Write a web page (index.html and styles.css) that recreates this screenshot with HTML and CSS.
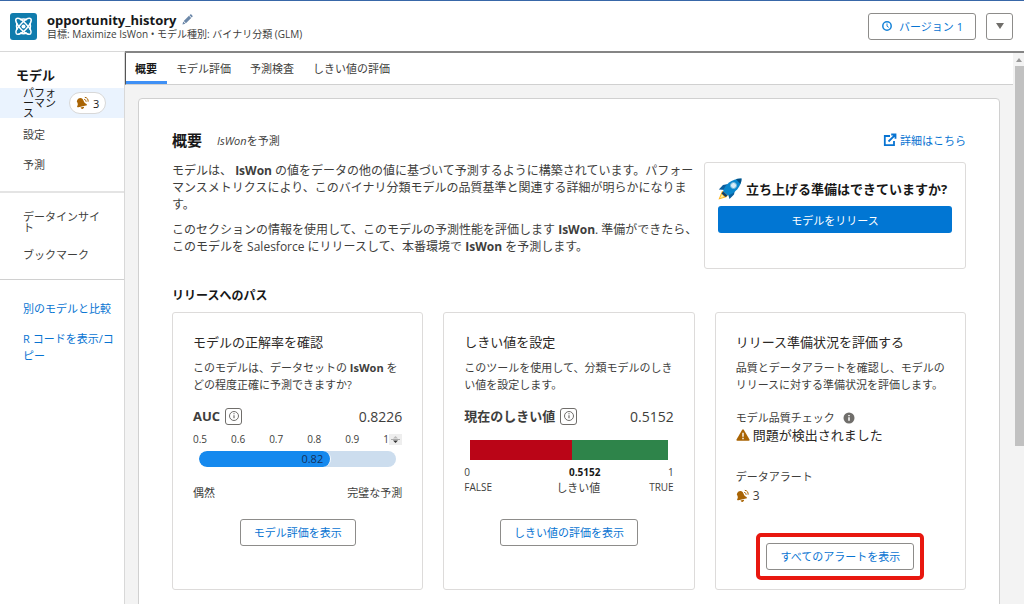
FILE: index.html
```html
<!DOCTYPE html>
<html lang="ja">
<head>
<meta charset="utf-8">
<meta name="viewport" content="width=device-width, initial-scale=1">
<title>opportunity_history</title>
<link rel="stylesheet" href="styles.css">
</head>
<body>
<svg class="defs" aria-hidden="true">
  <symbol id="bell" viewBox="0 0 14 14">
    <path d="M.8 5.400C1.400 2.400 4.600 1.200 6.600 2.900c1 .9 1 3.200 2.600 4.300l1.300.7c.7.6.4 1.500-.5 1.600l-7.600 1.800c-.9.2-1.700-.6-1.100-1.400.9-1.300.6-2.700-.5-4.500z" fill="#a96404"/>
    <path d="M4.500 11.600l3.600-.8c0 2.400-2.900 2.900-3.600.8z" fill="#a96404"/>
    <path d="M8.200 3.400c1.300.2 2 1.100 1.900 2.400M8.800 1.300c2.300.2 3.600 2 3.300 4.400" fill="none" stroke="#a96404" stroke-width="1"/>
  </symbol>
  <symbol id="info" viewBox="0 0 12 12">
    <circle cx="6" cy="6" r="4.500" fill="none" stroke="#706e6b"/>
    <path d="M6 5.300v3M6 3.300v1" stroke="#706e6b" stroke-width="1.200"/>
  </symbol>
</svg>
<div class="app">
  <header class="header">
    <svg class="logo" viewBox="0 0 27 27" aria-hidden="true">
      <rect width="27" height="27" rx="3" fill="#107cad"/>
      <g fill="none" stroke="#fff" stroke-width="1.500">
        <path d="M6.200 5.800c1.800-1.600 6 1.200 9.400 4.700s6.600 8.300 5 10.300c-1.600 1.700-6.200-1-9.600-4.600S4.600 7.600 6.200 5.800z"/>
        <path d="M20.800 5.800c-1.800-1.600-6 1.200-9.400 4.700s-6.600 8.300-5 10.300c1.600 1.700 6.200-1 9.600-4.600s6.400-8.600 4.800-10.400z"/>
        <path d="M10 6.700c2.400-.9 4.600-.9 7 0M10 20c2.400.9 4.600.9 7 0M7 10c-.8 2.500-.8 4.500 0 7M20 10c.8 2.500.8 4.500 0 7"/>
      </g>
      <circle cx="13.500" cy="13.400" r="2" fill="#fff"/>
    </svg>
    <div class="heading">
      <div class="title-row">
        <h1>opportunity_history</h1>
        <svg class="pencil" viewBox="0 0 12 12" aria-hidden="true"><path d="M.5 11.500l.8-3.200 2.400 2.400zM1.900 7.700l5.700-5.700 2.400 2.400-5.700 5.700zM8.200 1.400l.8-.8c.4-.4.800-.4 1.200 0l1.200 1.200c.4.4.4.800 0 1.200l-.8.8z" fill="#6b87a8"/></svg>
      </div>
      <p>目標: Maximize IsWon • モデル種別: バイナリ分類 (GLM)</p>
    </div>
    <button class="btn version"><svg viewBox="0 0 12 12" aria-hidden="true"><circle cx="6" cy="6" r="4.200" fill="none" stroke="#1683d8" stroke-width="1.500"/><path d="M6 3.500V6.200l1.700 1.200" fill="none" stroke="#1683d8"/></svg>バージョン 1</button>
    <button class="btn more" aria-label="メニュー"><svg viewBox="0 0 10 6" aria-hidden="true"><path d="M1 0h8L5 6z" fill="#706e6b"/></svg></button>
  </header>
  <div class="body">
    <nav class="side">
      <h2>モデル</h2>
      <a class="item active" href="#"><span class="short">パフォーマンス</span><span class="badge"><svg viewBox="0 0 14 14" aria-hidden="true"><use href="#bell"/></svg>3</span></a>
      <a class="item" href="#">設定</a>
      <a class="item" href="#">予測</a>
      <hr class="heavy">
      <a class="item two" href="#">データインサイト</a>
      <a class="item last" href="#">ブックマーク</a>
      <hr>
      <a class="link" href="#">別のモデルと比較</a>
      <a class="link" href="#">R コードを表示/コピー</a>
    </nav>
    <main class="main">
      <div class="scroll">
        <nav class="tabs">
          <a class="on" href="#">概要</a><a href="#">モデル評価</a><a href="#">予測検査</a><a href="#">しきい値の評価</a>
        </nav>
        <div class="canvas">
          <section class="panel">
            <div class="panel-head">
              <h2>概要</h2><span class="predict"><i>IsWon</i>を予測</span>
              <a class="details" href="#"><svg viewBox="0 0 14 14" aria-hidden="true"><path d="M7 3H1.800v9.200H11V8M8.200 1.500h4.300v4.300M12.200 1.800L5.500 8.500" fill="none" stroke="#0874d2" stroke-width="1.800"/></svg>詳細はこちら</a>
            </div>
            <div class="intro">
              <div class="copy">
                <p>モデルは、 <b>IsWon</b> の値をデータの他の値に基づいて予測するように構築されています。パフォー<br>マンスメトリクスにより、このバイナリ分類モデルの品質基準と関連する詳細が明らかになりま<br>す。</p>
                <p>このセクションの情報を使用して、このモデルの予測性能を評価します <b>IsWon</b>. 準備ができたら、<br>このモデルを Salesforce にリリースして、本番環境で <b>IsWon</b> を予測します。</p>
              </div>
              <div class="launch">
                <h3><svg viewBox="0 0 24 22" aria-hidden="true">
                  <path d="M4 13l-3.500 8.500L9 19l1-4z" fill="#ffb31a"/><path d="M4 16l-2 4 4-1z" fill="#fff0a0"/>
                  <path d="M10 6L5 7 .8 11.500 7 12zM17 12l-1 4.500-4.500 4.500L10 16z" fill="#0b5f9e"/>
                  <path d="M5 13.500C7 6.500 13 .8 23.500.5 23.500 8.500 17 15.500 9.500 17.500z" fill="#0a86cc"/>
                  <path d="M18 .9l5.500-.4c0 2.200-.4 4-1.200 5.500z" fill="#064f82"/>
                  <path d="M5 13.500l4.500 4-2 1.500-4-3.500z" fill="#123f6b"/>
                  <circle cx="15.500" cy="7.500" r="3" fill="#d8edf7" stroke="#6db6d9"/></svg>立ち上げる準備はできていますか?</h3>
                <button class="release">モデルをリリース</button>
              </div>
            </div>
            <h3 class="path">リリースへのパス</h3>
            <div class="cards">
              <article class="card">
                <h4>モデルの正解率を確認</h4>
                <p class="desc">このモデルは、データセットの <b>IsWon</b> を<br>どの程度正確に予測できますか?</p>
                <div class="metric"><b>AUC</b><button class="info" aria-label="AUC の情報"><svg viewBox="0 0 12 12"><use href="#info"/></svg></button><span>0.8226</span></div>
                <div class="ticks"><span>0.5</span><span>0.6</span><span>0.7</span><span>0.8</span><span>0.9</span><span class="end">1<svg viewBox="0 0 13 11" aria-hidden="true"><rect width="13" height="11" fill="#eee"/><path d="M4 4.500L6.500 2 9 4.500z" fill="#bbb"/><path d="M2 5.500h9" stroke="#aaa"/><path d="M4 6.500h5L6.500 9z" fill="#333"/></svg></span></div>
                <div class="gauge"><div class="fill">0.82</div></div>
                <div class="ends"><span>偶然</span><span>完璧な予測</span></div>
                <button class="btn action">モデル評価を表示</button>
              </article>
              <article class="card">
                <h4>しきい値を設定</h4>
                <p class="desc">このツールを使用して、分類モデルのしき<br>い値を設定します。</p>
                <div class="metric"><b>現在のしきい値</b><button class="info" aria-label="しきい値の情報"><svg viewBox="0 0 12 12"><use href="#info"/></svg></button><span>0.5152</span></div>
                <div class="split"><div class="neg"></div></div>
                <div class="legend"><span>0<br>FALSE</span><span class="mid"><b>0.5152</b><br><span class="name">しきい値</span></span><span>1<br>TRUE</span></div>
                <button class="btn action">しきい値の評価を表示</button>
              </article>
              <article class="card">
                <h4>リリース準備状況を評価する</h4>
                <p class="desc">品質とデータアラートを確認し、モデルの<br>リリースに対する準備状況を評価します。</p>
                <div class="label quality">モデル品質チェック<svg viewBox="0 0 12 12" aria-hidden="true"><circle cx="6" cy="6" r="5.500" fill="#706e6b"/><path d="M6 5.200v3.500M6 3v1.200" stroke="#fff" stroke-width="1.500"/></svg></div>
                <div class="status"><svg viewBox="0 0 14 12" aria-hidden="true"><path d="M6.200.8q.8-1.100 1.600 0l5.700 9.700q.4 1.200-.8 1.300H1.300Q.1 11.700.5 10.500z" fill="#a96404"/><path d="M7 3.800v4M7 8.800v1.400" stroke="#fff" stroke-width="1.400"/></svg>問題が検出されました</div>
                <div class="label">データアラート</div>
                <div class="count"><svg viewBox="0 0 14 14" aria-hidden="true"><use href="#bell"/></svg>3</div>
                <div class="marked"><button class="btn">すべてのアラートを表示</button></div>
              </article>
            </div>
          </section>
        </div>
      </div>
      <div class="bar" aria-hidden="true"><i class="arrow"></i><i class="thumb"></i></div>
    </main>
  </div>
</div>
</body>
</html>
```
FILE: styles.css
```css
* { box-sizing: border-box; }
body, h1, h2, h3, h4, p { margin: 0; }
body, button { font-family: "Open Sans", "Noto Sans CJK JP", sans-serif; font-size: 11px; }
body { color: #3e3e3c; line-height: 17px; background: #fff; }
a { color: #3e3e3c; text-decoration: none; }
svg { flex: none; display: block; }
button { cursor: pointer; }
.defs { position: absolute; width: 0; height: 0; }
.app { height: 100vh; display: flex; flex-direction: column; overflow: hidden; border-top: 1px solid #3867a8; }

.header { flex: none; display: flex; align-items: center; height: 50px; padding: 0 11px 0 10px; }
.logo { width: 27px; height: 27px; }
.heading { flex: 1; margin-left: 10px; }
.heading p { font-size: 10px; line-height: 13px; }
.title-row { display: flex; align-items: center; gap: 5px; }
h1 { font-size: 13px; line-height: 16px; color: #16181a; }
.pencil { width: 11px; height: 11px; }
.btn { height: 27px; border: 1px solid #8d8c8a; border-radius: 3px; background: #fff; color: #0874d2; padding: 0 13px; line-height: 17px; }
.version { display: flex; align-items: center; gap: 6px; padding: 0 12px; }
.version svg { width: 12px; height: 12px; }
.more { width: 27px; padding: 0; margin-left: 10px; display: flex; align-items: center; justify-content: center; }
.more svg { width: 10px; height: 6px; }

.body { flex: 1; min-height: 0; display: flex; }
.side { flex: none; width: 125px; border-top: 1px solid #d8d8d8; border-right: 1px solid #d8d8d8; padding-top: 14px; }
.side h2 { font-size: 13px; line-height: 18px; color: #181818; padding: 0 16px; margin-bottom: 4px; }
.item { display: flex; align-items: center; height: 30px; padding-left: 23px; line-height: 11px; }
.active { background: #eaf3fe; color: #181818; gap: 12px; }
.active + .item { margin-top: 1px; }
.short { width: 34px; line-height: 10px; line-break: anywhere; }
.badge { display: flex; align-items: center; gap: 3px; height: 22px; padding: 0 6px; border: 1px solid #d8d8d8; border-radius: 11px; background: #fff; }
.badge svg, .count svg { width: 14px; height: 14px; }
.side hr { margin: 10px 0 20px; border: 0; border-top: 1px solid #d0d0d0; }
.side .heavy { margin: 12px 0; border-top: 2px solid #e4e4e4; }
.two { height: 34px; padding-right: 20px; line-break: anywhere; }
.link { display: block; color: #0874d2; padding: 0 8px 0 23px; margin-bottom: 13px; line-break: anywhere; }

.main { flex: 1; min-width: 0; display: flex; border-top: 2px solid #858585; }
.scroll { flex: 1; min-width: 0; overflow: hidden; background: #f3f3f3; }
.tabs { display: flex; height: 32px; border-bottom: 1px solid #d0d0d0; border-left: 1px solid #555; background: #fff; }
.tabs a { padding: 7px 10px 0 9px; }
.tabs .on { font-weight: bold; color: #181818; border-bottom: 3px solid #3f90f5; }
.canvas { padding: 13px 13px 0; }
.panel { border: 1px solid #d0d0d0; border-radius: 4px; background: #fff; padding: 29px 33px 60px; }
.bar { flex: none; width: 11px; background: #f3f3f3; display: flex; flex-direction: column; align-items: flex-end; }
.arrow { border: 3px solid transparent; border-bottom: 4px solid #999; border-top: 0; margin: 5px 2px 4px; }
.thumb { width: 9px; height: 69%; background: #c1c1c1; }

.panel-head { display: flex; align-items: center; height: 24px; }
.panel-head h2 { font-size: 15px; color: #181818; }
.predict { margin-left: 15px; }
.details { margin-left: auto; display: flex; align-items: center; gap: 3px; color: #0874d2; }
.details svg { width: 14px; height: 14px; }
.intro { display: flex; justify-content: space-between; margin-top: 10px; }
.copy { font-size: 12px; }
.copy p { margin-bottom: 8px; white-space: nowrap; }
.launch { flex: none; width: 33%; height: 107px; border: 1px solid #dddbda; border-radius: 3px; padding: 15px 13px; }
.launch h3 { display: flex; align-items: center; gap: 4px; font-size: 13px; line-height: 22px; color: #181818; white-space: nowrap; margin-bottom: 6px; }
.launch svg { width: 24px; height: 22px; }
.release { width: 100%; height: 27px; border: 0; border-radius: 3px; background: #0176d3; color: #fff; }
.path { font-size: 12px; line-height: 18px; color: #181818; margin: 18px 0 7px; }
.cards { display: grid; grid-template-columns: repeat(3, 1fr); gap: 20px; }
.card { display: flex; flex-direction: column; min-height: 278px; padding: 20px; border: 1px solid #dddbda; border-radius: 3px; }
.card h4 { font-size: 13px; font-weight: normal; line-height: 18px; color: #2b2826; margin-bottom: 8px; }
.desc { white-space: nowrap; }
.metric { display: flex; align-items: center; gap: 5px; height: 18px; margin-top: 14px; font-size: 13px; white-space: nowrap; }
.metric span { margin-left: auto; font-size: 14px; }
.info { width: 17px; height: 17px; padding: 0; border: 1px solid #706e6b; border-radius: 3px; background: #fff; display: flex; align-items: center; justify-content: center; }
.info svg { width: 12px; height: 12px; }
.ticks { display: grid; grid-template-columns: repeat(5, 1fr) 19px; margin-top: 6px; font-size: 10px; }
.end { display: flex; align-items: center; }
.end svg { width: 13px; height: 11px; }
.gauge { height: 16px; margin: 3px 6px 17px; border-radius: 8px; background: #ccddee; overflow: hidden; }
.fill { width: 67%; height: 16px; border-radius: 8px; border-right: 1px solid #fff; background: #1589ee; color: #16325c; text-align: right; padding-right: 7px; line-height: 16px; }
.ends { display: flex; justify-content: space-between; }
.action { align-self: center; margin-top: auto; margin-bottom: 23px; }
.split { height: 20px; margin: 15px 6px 5px; background: #2e844a; }
.neg { width: 51.52%; height: 20px; background: #ba0517; }
.legend { display: grid; grid-template-columns: 43% 22% 1fr; font-size: 10px; line-height: 15px; text-align: right; }
.legend > :first-child { text-align: left; }
.mid b { color: #181818; }
.name { font-size: 11px; }
.label { display: flex; align-items: center; margin-top: 24px; }
.label svg { width: 12px; height: 12px; margin-left: 8px; }
.quality { margin-top: 16px; }
.status { display: flex; align-items: center; gap: 3px; line-height: 18px; font-size: 13px; color: #2b2826; }
.status svg { width: 14px; height: 12px; }
.count { display: flex; align-items: center; gap: 3px; margin-top: 2px; font-size: 12px; }
.marked { align-self: center; margin-top: auto; margin-bottom: -11px; padding: 6px; border: 4px solid #e8170f; border-radius: 5px; }
```
